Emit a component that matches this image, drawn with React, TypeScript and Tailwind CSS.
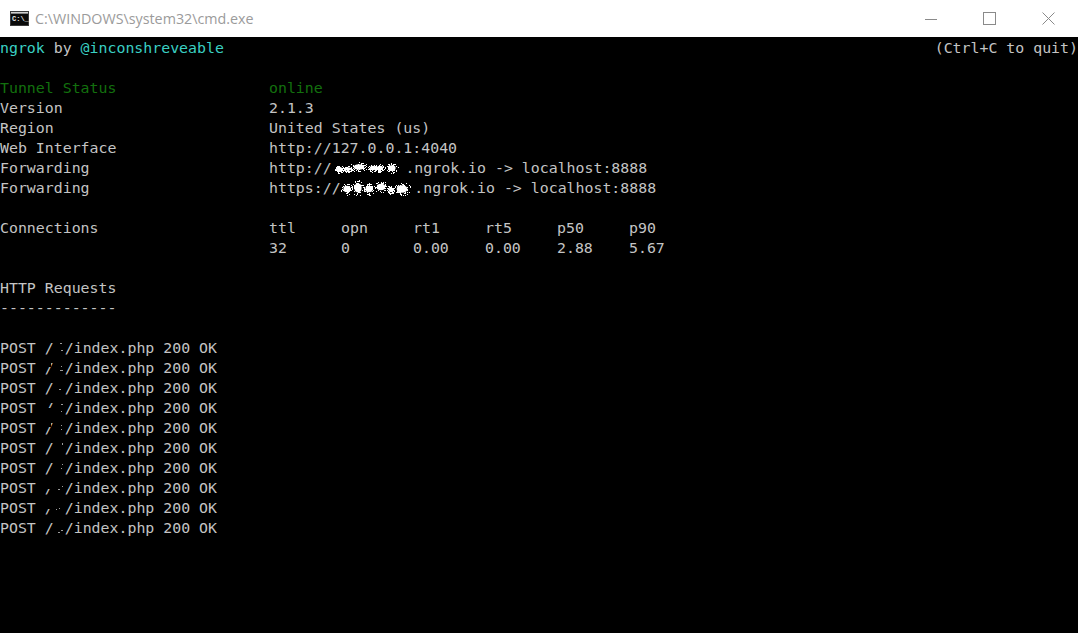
const requests = [
  { cover: "", marks: [[60, 5, 2, 1], [61, 12, 2, 1]] },
  { cover: "top", marks: [[60, 12, 3, 1], [61, 8, 1, 1]] },
  { cover: "", marks: [[59, 11, 2, 1]] },
  { cover: "low", marks: [[61, 6, 2, 1], [61, 13, 1, 1]] },
  { cover: "top", marks: [[61, 7, 1, 1], [61, 11, 1, 1]] },
  { cover: "", marks: [[62, 5, 1, 2]] },
  { cover: "", marks: [[62, 6, 1, 1], [61, 10, 1, 1]] },
  { cover: "mid", marks: [[58, 11, 2, 1], [62, 8, 1, 1]] },
  { cover: "mid", marks: [[56, 11, 1, 1], [59, 10, 1, 1]] },
  { cover: "", marks: [[58, 14, 2, 1], [61, 12, 2, 1]] },
];

// white scribble that hides the tunnel hostname: [centre x, centre y, radius x, radius y]
const hostA = [[7, 11, 5, 4], [16, 11, 5, 3], [27, 9, 9, 5], [41, 10, 5, 4], [48, 10, 5, 4], [60, 10, 6, 5]];
const hostB = [[6, 11, 6, 6], [17, 10, 6, 8], [28, 11, 6, 6], [40, 9, 7, 6], [50, 12, 4, 4], [61, 11, 9, 7]];

function Scribble({ width, seed, blobs }: { width: number; seed: number; blobs: number[][] }) {
  let s = seed;
  const rand = () => {
    s = (s * 9301 + 49297) % 233280;
    return s / 233280;
  };
  const dots = [];
  blobs.forEach(([cx, cy, rx, ry], b) => {
    dots.push(<ellipse key={"b" + b} cx={cx} cy={cy} rx={rx * 0.6} ry={ry * 0.55} fill="#fff" />);
    for (let i = 0; i < 55; i++) {
      const a = rand() * 6.283;
      const r = Math.sqrt(rand());
      dots.push(
        <rect
          key={b + "-" + i}
          x={Math.round(cx + Math.cos(a) * r * rx)}
          y={Math.round(cy + Math.sin(a) * r * ry)}
          width={1}
          height={1}
          fill="#fff"
        />,
      );
    }
  });
  return (
    <svg width={width} height={20} className="inline-block align-top">
      {dots}
    </svg>
  );
}

function RequestRow({ cover, marks }: { cover: string; marks: number[][] }) {
  return (
    <div className="h-5 whitespace-pre">
      <span>POST </span>
      <span className="relative inline-block w-[8.96px]">
        /
        {cover === "top" && <span className="absolute left-0 top-0 h-[9px] w-[6px] bg-black" />}
        {cover === "low" && <span className="absolute left-0 top-[10px] h-[9px] w-[9px] bg-black" />}
        {cover === "mid" && <span className="absolute left-0 top-[2px] h-[9px] w-[9px] bg-black" />}
      </span>
      <svg width={11} height={20} viewBox="54 0 11 20" className="inline-block align-top">
        {marks.map((m, i) => (
          <rect key={i} x={m[0]} y={m[1]} width={m[2]} height={m[3]} fill="#9a9a9a" />
        ))}
      </svg>
      <span>/index.php 200 OK</span>
    </div>
  );
}

function InfoRow({ label, value, className }: { label: string; value: React.ReactNode; className?: string }) {
  return (
    <div className={"grid h-5 grid-cols-[269px_1fr] whitespace-pre " + (className ?? "")}>
      <span>{label}</span>
      <span>{value}</span>
    </div>
  );
}

export default function App() {
  return (
    <div className="flex h-[633px] w-[1078px] flex-col overflow-hidden bg-black">
      <div className="flex h-[37px] shrink-0 items-center bg-white pl-[10px]">
        <svg width="19" height="15" viewBox="0 0 19 15" className="mr-[6px]">
          <rect width="19" height="15" fill="#3a3a3a" />
          <rect x="1" y="3" width="17" height="11" fill="#0a0a0a" />
          <rect x="1" y="1" width="17" height="1.5" fill="#d0d0d0" />
          <text x="2" y="10" fontSize="7" fontFamily="Liberation Mono, monospace" fill="#e8e8e8" fontWeight="700">C:\_</text>
        </svg>
        <span className="font-['Open_Sans',sans-serif] text-[14.3px] text-[#9b9b9b]">C:\WINDOWS\system32\cmd.exe</span>
        <div className="ml-auto flex items-center pr-[23px]">
          <svg width="12" height="12" className="mr-[46px]">
            <line x1="0" y1="6.5" x2="12" y2="6.5" stroke="#8a8a8a" />
          </svg>
          <svg width="13" height="13" className="mr-[46px]">
            <rect x="0.5" y="0.5" width="12" height="12" fill="none" stroke="#8a8a8a" />
          </svg>
          <svg width="13" height="13">
            <path d="M0.5 0.5L12.5 12.5M12.5 0.5L0.5 12.5" stroke="#8a8a8a" fill="none" />
          </svg>
        </div>
      </div>

      <div className="pt-px font-['DejaVu_Sans_Mono',monospace] text-[14.88px] leading-5 text-[#c4c4c4] [&>*]:h-5">
        <div className="flex justify-between whitespace-pre">
          <span>
            <span className="text-[#3ad0c4]">ngrok</span> by <span className="text-[#3ad0c4]">@inconshreveable</span>
          </span>
          <span>(Ctrl+C to quit)</span>
        </div>
        <div />
        <InfoRow label="Tunnel Status" value="online" className="text-[#13700e]" />
        <InfoRow label="Version" value="2.1.3" />
        <InfoRow label="Region" value="United States (us)" />
        <InfoRow label="Web Interface" value="http://127.0.0.1:4040" />
        <InfoRow
          label="Forwarding"
          value={<>http://<Scribble width={73.7} seed={7} blobs={hostA} />.ngrok.io -&gt; localhost:8888</>}
        />
        <InfoRow
          label="Forwarding"
          value={<>https://<Scribble width={73.7} seed={21} blobs={hostB} />.ngrok.io -&gt; localhost:8888</>}
        />
        <div />
        <InfoRow
          label="Connections"
          value={
            <span className="grid grid-cols-[repeat(6,72px)]">
              <span>ttl</span><span>opn</span><span>rt1</span><span>rt5</span><span>p50</span><span>p90</span>
            </span>
          }
        />
        <InfoRow
          label=""
          value={
            <span className="grid grid-cols-[repeat(6,72px)]">
              <span>32</span><span>0</span><span>0.00</span><span>0.00</span><span>2.88</span><span>5.67</span>
            </span>
          }
        />
        <div />
        <div>HTTP Requests</div>
        <div>-------------</div>
        <div />
        {requests.map((r, i) => (
          <RequestRow key={i} cover={r.cover} marks={r.marks} />
        ))}
      </div>
    </div>
  );
}
